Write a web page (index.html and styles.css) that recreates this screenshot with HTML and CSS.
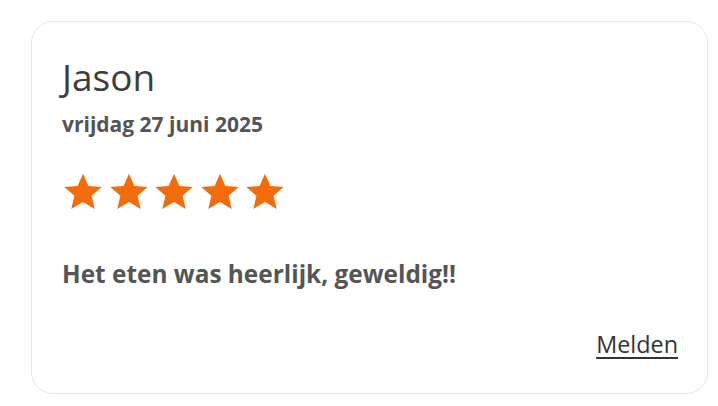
FILE: index.html
```html
<!DOCTYPE html>
<html lang="nl">
<head>
    <meta charset="UTF-8">
    <meta name="viewport" content="width=device-width, initial-scale=1.0">
    <title>Review</title>
    <link rel="stylesheet" href="styles.css">
</head>
<body>
    <div class="review">
        <h2 class="name">Jason</h2>
        <div class="date">vrijdag 27 juni 2025</div>
        <div class="stars">
            <svg viewBox="0 0 24 24"><path d="M12 1.5l3.1 7.1 7.6.6-5.8 5 1.8 7.5L12 17.7l-6.7 4 1.8-7.5-5.8-5 7.6-.6z"/></svg>
            <svg viewBox="0 0 24 24"><path d="M12 1.5l3.1 7.1 7.6.6-5.8 5 1.8 7.5L12 17.7l-6.7 4 1.8-7.5-5.8-5 7.6-.6z"/></svg>
            <svg viewBox="0 0 24 24"><path d="M12 1.5l3.1 7.1 7.6.6-5.8 5 1.8 7.5L12 17.7l-6.7 4 1.8-7.5-5.8-5 7.6-.6z"/></svg>
            <svg viewBox="0 0 24 24"><path d="M12 1.5l3.1 7.1 7.6.6-5.8 5 1.8 7.5L12 17.7l-6.7 4 1.8-7.5-5.8-5 7.6-.6z"/></svg>
            <svg viewBox="0 0 24 24"><path d="M12 1.5l3.1 7.1 7.6.6-5.8 5 1.8 7.5L12 17.7l-6.7 4 1.8-7.5-5.8-5 7.6-.6z"/></svg>
        </div>
        <p class="text">Het eten was heerlijk, geweldig!!</p>
        <div class="actions">
            <a href="#" class="report">Melden</a>
        </div>
    </div>
</body>
</html>
```

FILE: styles.css
```css
body {
    font-family: "Open Sans", "Noto Sans", sans-serif;
    background-color: #fff;
    margin: 0;
    padding: 21px 10px 12px 31px;
}
.review {
    box-sizing: border-box;
    height: 373px;
    border: 1.5px solid #e9e7e0;
    border-radius: 22px;
    padding: 28px 29px 0 30px;
    display: flex;
    flex-direction: column;
}
.name {
    margin: 0;
    font-size: 37px;
    font-weight: 400;
    line-height: 54px;
    color: #3d3d3d;
}
.date {
    margin-top: 7px;
    font-size: 21px;
    font-weight: 700;
    color: #555;
    line-height: 26px;
}
.stars {
    display: flex;
    gap: 3.5px;
    margin-top: 34px;
}
.stars svg {
    width: 42px;
    height: 42px;
    fill: #f36b0b;
}
.text {
    margin: 46px 0 0;
    font-size: 24.4px;
    font-weight: 700;
    color: #555;
    line-height: 30px;
}
.actions {
    margin-top: 39px;
    text-align: right;
}
.report {
    font-size: 23.4px;
    color: #333;
    text-decoration: underline;
    text-underline-offset: 4px;
}
```
